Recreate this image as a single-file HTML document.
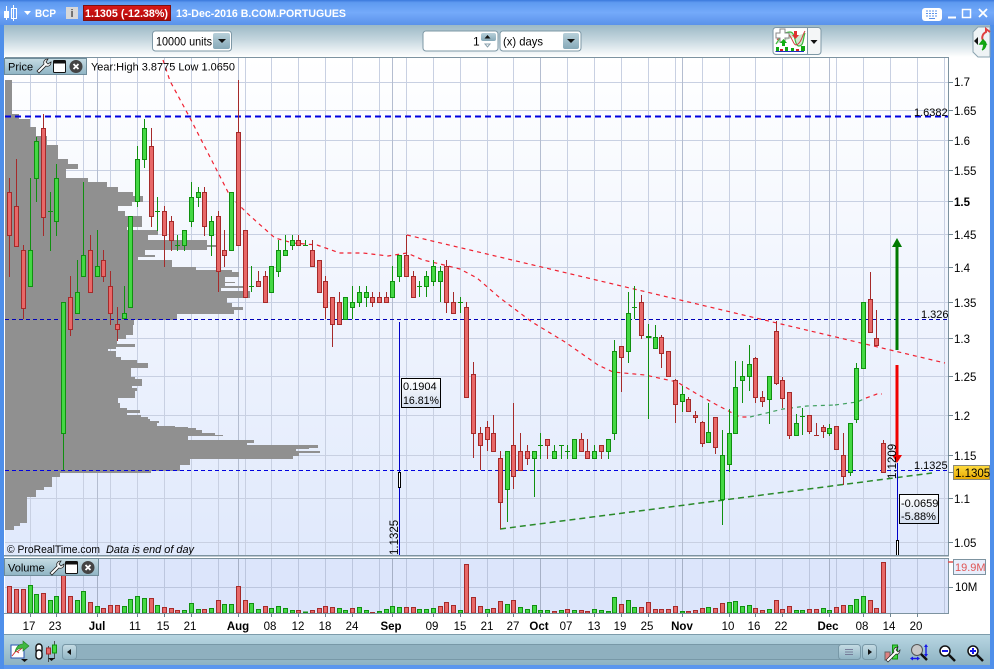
<!DOCTYPE html>
<html><head><meta charset="utf-8"><title>BCP</title>
<style>
html,body{margin:0;padding:0;background:#fff;width:994px;height:669px;overflow:hidden}
svg{display:block;position:absolute;left:0;top:0}
text{font-family:"Liberation Sans",sans-serif;font-size:11px;fill:#000}
.w{fill:#fff;font-weight:bold}
.m{text-anchor:middle}
.b{font-weight:bold}
.a text,.xl text{font-size:11.5px}
</style></head><body>
<svg width="994" height="669" viewBox="0 0 994 669" xmlns="http://www.w3.org/2000/svg">
<defs>
<linearGradient id="tb" x1="0" y1="0" x2="0" y2="1"><stop offset="0" stop-color="#3a78dc"/><stop offset=".1" stop-color="#5e9af0"/><stop offset=".5" stop-color="#74aafa"/><stop offset="1" stop-color="#5a92ea"/></linearGradient>
<linearGradient id="tool" x1="0" y1="0" x2="0" y2="1"><stop offset="0" stop-color="#9cb9c6"/><stop offset=".45" stop-color="#c4d6de"/><stop offset="1" stop-color="#ffffff"/></linearGradient>
<linearGradient id="plot" x1="0" y1="0" x2="0" y2="1"><stop offset="0" stop-color="#ffffff"/><stop offset="1" stop-color="#e0e9fc"/></linearGradient>
<linearGradient id="bot" x1="0" y1="0" x2="0" y2="1"><stop offset="0" stop-color="#b8d6e2"/><stop offset="1" stop-color="#8db2c2"/></linearGradient>
<linearGradient id="lab" x1="0" y1="0" x2="0" y2="1"><stop offset="0" stop-color="#c6dce4"/><stop offset="1" stop-color="#8fb4c4"/></linearGradient>
<linearGradient id="btn" x1="0" y1="0" x2="0" y2="1"><stop offset="0" stop-color="#b8d0da"/><stop offset="1" stop-color="#86a9b8"/></linearGradient>
<linearGradient id="yel" x1="0" y1="0" x2="0" y2="1"><stop offset="0" stop-color="#ffdc40"/><stop offset="1" stop-color="#e8a800"/></linearGradient>
<linearGradient id="rb" x1="0" y1="0" x2="0" y2="1"><stop offset="0" stop-color="#d81818"/><stop offset="1" stop-color="#b00808"/></linearGradient>
<linearGradient id="note" x1="0" y1="0" x2="0" y2="1"><stop offset="0" stop-color="#ffffff"/><stop offset="1" stop-color="#d4dff0"/></linearGradient>
</defs>
<!-- window frame -->
<rect width="994" height="669" fill="#5a96ee"/>
<rect x="0" y="0" width="994" height="25" fill="url(#tb)"/>
<rect x="4" y="25" width="986" height="32" fill="url(#tool)"/>
<rect x="4" y="57" width="986" height="578" fill="#fff"/>
<rect x="4" y="635" width="986" height="30" fill="url(#bot)"/>
<rect x="4" y="634" width="986" height="1" fill="#7d9cab"/>
<rect x="0" y="25" width="4" height="644" fill="#4f8fea"/>
<rect x="990" y="25" width="4" height="644" fill="#4f8fea"/>
<!-- title bar -->
<g shape-rendering="crispEdges">
<path d="M6.500 6V20M13.500 5V21" stroke="#fff" fill="none"/>
<rect x="4" y="11" width="5" height="7" fill="#fff"/>
<rect x="11.500" y="8.500" width="5" height="10" fill="none" stroke="#fff"/>
</g>
<path d="M24 11h7l-3.500 4z" fill="#fff"/>
<text x="35" y="17" class="w" textLength="21" lengthAdjust="spacingAndGlyphs">BCP</text>
<rect x="66" y="7" width="12" height="12" fill="#d8d8d8"/>
<text x="72" y="17" class="m b" style="fill:#555">i</text>
<rect x="83.500" y="5.500" width="87" height="15" fill="url(#rb)" stroke="#7c1010"/>
<text x="85" y="17" class="w" textLength="83" lengthAdjust="spacingAndGlyphs">1.1305 (-12.38%)</text>
<text x="176" y="17" class="w" textLength="170" lengthAdjust="spacingAndGlyphs">13-Dec-2016 B.COM.PORTUGUES</text>
<rect x="922" y="8" width="20" height="13" rx="3" fill="#fff"/>
<path d="M926 11h12M926 13.500h12M926 16h12" stroke="#5a92ea" stroke-dasharray="2 1" fill="none"/>
<path d="M929 18.500h6" stroke="#5a92ea"/>
<path d="M948 17.500h8" stroke="#fff" stroke-width="2" fill="none"/>
<rect x="962.500" y="9.500" width="8" height="8" fill="none" stroke="#fff" stroke-width="1.500"/>
<path d="M979 9l8 8M987 9l-8 8" stroke="#fff" stroke-width="1.800" fill="none"/>
<!-- toolbar controls -->
<rect x="152.500" y="31" width="79" height="20" rx="3" fill="#fff" stroke="#7e98a6"/>
<text x="156" y="45.500" textLength="56" lengthAdjust="spacingAndGlyphs" style="font-size:12px">10000 units</text>
<rect x="213" y="33" width="17" height="16" rx="2" fill="url(#btn)"/>
<path d="M218 39h8l-4 4z" fill="#111"/>
<rect x="423" y="31" width="75" height="20" rx="3" fill="#fff" stroke="#7e98a6"/>
<text x="473" y="45.500" style="font-size:12px">1</text>
<rect x="481" y="33" width="15" height="8" rx="2" fill="url(#btn)"/>
<path d="M484.500 38.500h6l-3-3.500z" fill="#111"/>
<path d="M485 44h5l-2.500 3z" fill="none" stroke="#8aa0ac"/>
<rect x="500" y="31" width="81" height="20" rx="3" fill="#fff" stroke="#7e98a6"/>
<text x="503" y="45.500" textLength="40" lengthAdjust="spacingAndGlyphs" style="font-size:12px">(x) days</text>
<rect x="563" y="33" width="16" height="16" rx="2" fill="url(#btn)"/>
<path d="M567 39h8l-4 4z" fill="#111"/>
<rect x="773" y="27.500" width="48" height="27" rx="3" fill="#f4f6f7" stroke="#7e98a6"/>
<rect x="774" y="28.500" width="33" height="25" rx="2" fill="#fff"/>
<path d="M807.500 28V54" stroke="#7e98a6"/>
<path d="M776 44C781 36 784 32 790 32S794 46 799 46 803 38 805 33" fill="#cfe8cf" stroke="#3cba3c" stroke-width="1.200"/>
<path d="M777 40C782 34 786 30 790 36S794 47 798 44 802 36 805 31" fill="none" stroke="#d04040"/>
<path d="M776 33h4v-4h5v4h4v5h-4v4h-5v-4h-4z" fill="#fff" stroke="#888"/>
<path d="M794 31h3v4h2l-3.500 4-3.500-4h2z" fill="#e03030"/>
<path d="M782 46v-3h-2l3.500-4 3.500 4h-2v3z" fill="#10b010"/>
<path d="M775.500 51.500H804" stroke="#2030c0"/>
<path d="M776 47h3v4h-3zM785 47h3v4h-3zM791 48h3v3h-3zM801 46h4v5h-4z" fill="#10a810"/>
<path d="M780 49h3v2h-3zM796 49h3v2h-3z" fill="#d02020"/>
<path d="M810.500 40h7l-3.500 4z" fill="#111"/>
<path d="M990 27h-12l-5 5v20l5 5h12z" fill="#eef3f5" stroke="#8aa3b0"/>
<path d="M978 37v8l-4-4z" fill="#111"/>
<path d="M984 41c-3-2-2-7 2-9v-3l4 3" fill="none" stroke="#e04040" stroke-width="2"/>
<path d="M984 41c3 2 2 7-2 9M983 40l3 4h-6z" fill="#10b010" stroke="#10a010" stroke-width="1.500"/>
<!-- price panel -->
<rect x="5" y="57" width="943" height="498" fill="url(#plot)"/>
<g stroke="#c8d0e2" fill="none" shape-rendering="crispEdges">
<path d="M5 82.500H948M5 110.500H948M5 140.500H948M5 170.500H948M5 201.500H948M5 234.500H948M5 267.500H948M5 302.500H948M5 338.500H948M5 376.500H948M5 415.500H948M5 455.500H948M5 498.500H948M5 542.500H948"/>
<path d="M30.500 57V555M56.500 57V555M83.500 57V555M110.500 57V555M137.500 57V555M164.500 57V555M191.500 57V555M218.500 57V555M245.500 57V555M271.500 57V555M298.500 57V555M325.500 57V555M352.500 57V555M379.500 57V555M406.500 57V555M433.500 57V555M460.500 57V555M487.500 57V555M513.500 57V555M567.500 57V555M594.500 57V555M621.500 57V555M648.500 57V555M675.500 57V555M702.500 57V555M729.500 57V555M755.500 57V555M782.500 57V555M809.500 57V555M836.500 57V555M863.500 57V555M890.500 57V555M917.500 57V555M944.500 57V555"/>
<path d="M97.500 57V555M238.500 57V555M392.500 57V555M540.500 57V555M682.500 57V555M829.500 57V555" stroke="#b4bdd0"/>
</g>
<!-- volume profile -->
<path fill="#909090" d="M5 80H12V114H19V119H30V127H36V136H47V145H58V159H68V164H78V169H66V178H88V182H107V187H118V192H133V196H143V202H132V206H118V211H125V216H142V227H127V230H158V235H148V240H207V245H221V247H207V250H145V255H155V257H138V260H172V267H196V270H232V272H239V277H225V282H235V283H225V286H248V288H221V291H250V298H227V303H232V307H243V310H234V314H177V320H134V325H133V335H126V339H117V344H135V347H116V349H108V351H116V357H121V360H137V363H148V368H131V377H135V379H142V386H132V388H137V391H135V398H118V403H120V408H127V410H140V413H127V415H141V417H148V419H150V421H159V423H157V426H175V427H188V428H196V430H202V433H215V435H223V436H188V440H254V443H247V445H318V448H309V449H296V451H320V453H299V456H293V459H190V465H180V471H151V473H60V477H52V487H44V490H36V497H27V523H20V526H14V530H5Z"/>
<!-- horizontal levels -->
<path d="M5 116.500H948" stroke="#0000e0" stroke-width="2" stroke-dasharray="6 4" fill="none" shape-rendering="crispEdges"/>
<path d="M5 319.500H948" stroke="#0000b8" stroke-dasharray="4 3" fill="none" shape-rendering="crispEdges"/>
<path d="M5 470.500H948" stroke="#0000e0" stroke-dasharray="4 3" fill="none" shape-rendering="crispEdges"/>
<!-- trend lines -->
<g fill="none" stroke-dasharray="4 4" stroke-width="1.200">
<path d="M163 60L170 81 190 118 230 196 247 213 258 223 275 238 293 243 317 245 340 253 363 253 388 256 407 253 423 260 440 264 460 269 477 278 500 298 532 322 565 342 598 365 613 372 645 375 677 382 697 394 717 405 740 417 750 417" stroke="#f02030"/>
<path d="M750 417L783 409 807 406 835 405" stroke="#3f9f5f"/>
<path d="M835 405L857 402 866 398" stroke="#3f9f5f"/>
<path d="M866 398L877 394 882 394" stroke="#f02030"/>
<path d="M407 235L945 363" stroke="#f02030"/>
<path d="M500 529L932 473" stroke="#2a8a2a" stroke-width="1.500" stroke-dasharray="6 4"/>
</g>
<!-- candle wicks -->
<path fill="none" stroke="#a52a2a" shape-rendering="crispEdges" d="M9.500 178V277M16.500 159V246M23.500 245V319M43.500 114V236M70.500 276V336M90.500 235V292M103.500 250V282M110.500 271V325M117.500 307V341M151.500 128V227M164.500 206V267M171.500 216V251M204.500 187V236M218.500 211V292M224.500 230V267M238.500 80V245M258.500 271V286M265.500 271V302M298.500 235V245M312.500 240V266M325.500 276V319M332.500 297V347M339.500 292V324M372.500 292V307M379.500 292V302M386.500 292V302M406.500 235V276M413.500 271V297M446.500 260V313M453.500 292V313M466.500 302V397M473.500 362V458M480.500 427V470M487.500 421V451M493.500 415V451M500.500 451V529M513.500 403V489M520.500 433V470M527.500 445V465M547.500 439V459M581.500 433V451M587.500 439V458M601.500 445V459M621.500 346V392M641.500 295V339M661.500 335V368M675.500 379V423M688.500 397V411M695.500 411V423M702.500 421V447M715.500 417V454M755.500 357V403M762.500 391V407M776.500 321V385M782.500 377V408M789.500 392V439M809.500 415V434M816.500 423V435M814 435.500H819M823.500 425V438M843.500 433V485M870.500 272V332M876.500 310V346M883.500 440V472"/>
<path fill="none" stroke="#109010" shape-rendering="crispEdges" d="M30.500 178V286M36.500 137V202M50.500 192V251M48 211.500H53M56.500 164V236M63.500 302V470M77.500 260V313M83.500 182V276M97.500 230V276M124.500 286V318M137.500 146V207M144.500 119V168M157.500 197V231M155 211.500H160M177.500 235V251M175 245.500H180M184.500 230V251M191.500 182V227M198.500 187V207M211.500 216V256M251.500 266V292M249 286.500H254M278.500 240V277M285.500 235V255M292.500 235V250M305.500 240V245M303 245.500H308M352.500 286V319M359.500 286V307M366.500 286V307M392.500 266V297M399.500 255V282M419.500 281V297M417 286.500H422M426.500 271V297M433.500 260V286M440.500 266V302M460.500 297V313M458 302.500H463M507.500 451V522M534.500 451V497M540.500 433V459M538 445.500H543M554.500 445V458M561.500 445V459M559 445.500H564M567.500 445V459M565 451.500H570M594.500 445V458M608.500 439V459M614.500 340V440M628.500 292V363M634.500 286V319M632 307.500H637M648.500 324V419M646 337.500H651V336.500H646M655.500 325V348M682.500 386V412M708.500 403V442M722.500 430V525M729.500 409V472M735.500 361V433M742.500 361V403M749.500 345V391M769.500 376V424M796.500 414V435M802.500 408V435M800 416.500H805M829.500 424V436M850.500 423V476M856.500 363V423"/>
<!-- candle bodies -->
<path fill="#e86868" stroke="#a52a2a" shape-rendering="crispEdges" d="M7.500 192.500h4V235.500h-4zM14.500 206.500h4V246.500h-4zM21.500 250.500h4V308.500h-4zM41.500 128.500h4V217.500h-4zM68.500 297.500h4V329.500h-4zM88.500 250.500h4V292.500h-4zM101.500 260.500h4V276.500h-4zM108.500 286.500h4V313.500h-4zM115.500 324.500h4V329.500h-4zM149.500 146.500h4V216.500h-4zM162.500 211.500h4V235.500h-4zM169.500 221.500h4V240.500h-4zM202.500 192.500h4V226.500h-4zM216.500 216.500h4V271.500h-4zM222.500 250.500h4V255.500h-4zM236.500 132.500h4V245.500h-4zM243.500 230.500h4V297.500h-4zM256.500 281.500h4V286.500h-4zM263.500 276.500h4V302.500h-4zM296.500 240.500h4V245.500h-4zM310.500 250.500h4V266.500h-4zM317.500 260.500h4V292.500h-4zM323.500 281.500h4V307.500h-4zM330.500 297.500h4V324.500h-4zM337.500 302.500h4V324.500h-4zM370.500 297.500h4V302.500h-4zM377.500 297.500h4V302.500h-4zM384.500 297.500h4V302.500h-4zM404.500 255.500h4V276.500h-4zM411.500 276.500h4V297.500h-4zM444.500 266.500h4V302.500h-4zM451.500 302.500h4V313.500h-4zM464.500 307.500h4V397.500h-4zM471.500 374.500h4V433.500h-4zM478.500 433.500h4V445.500h-4zM485.500 427.500h4V439.500h-4zM491.500 433.500h4V451.500h-4zM498.500 458.500h4V502.500h-4zM511.500 445.500h4V476.500h-4zM518.500 451.500h4V470.500h-4zM525.500 451.500h4V458.500h-4zM545.500 439.500h4V445.500h-4zM579.500 439.500h4V451.500h-4zM585.500 451.500h4V458.500h-4zM599.500 445.500h4V451.500h-4zM619.500 346.500h4V357.500h-4zM639.500 302.500h4V335.500h-4zM659.500 337.500h4V353.500h-4zM666.500 351.500h4V376.500h-4zM673.500 380.500h4V404.500h-4zM686.500 399.500h4V411.500h-4zM693.500 415.500h4V417.500h-4zM700.500 422.500h4V443.500h-4zM713.500 417.500h4V447.500h-4zM753.500 358.500h4V397.500h-4zM760.500 397.500h4V401.500h-4zM774.500 331.500h4V383.500h-4zM780.500 380.500h4V398.500h-4zM787.500 392.500h4V435.500h-4zM807.500 415.500h4V431.500h-4zM821.500 427.500h4V431.500h-4zM834.500 426.500h4V449.500h-4zM841.500 455.500h4V476.500h-4zM868.500 299.500h4V332.500h-4zM874.500 338.500h4V345.500h-4zM881.500 443.500h4V472.500h-4z"/>
<path fill="#44d844" stroke="#109010" shape-rendering="crispEdges" d="M28.500 250.500h4V286.500h-4zM34.500 141.500h4V178.500h-4zM54.500 178.500h4V221.500h-4zM61.500 302.500h4V433.500h-4zM75.500 292.500h4V313.500h-4zM81.500 255.500h4V276.500h-4zM95.500 266.500h4V276.500h-4zM122.500 313.500h4V318.500h-4zM128.500 216.500h4V307.500h-4zM135.500 159.500h4V201.500h-4zM142.500 128.500h4V159.500h-4zM182.500 230.500h4V245.500h-4zM189.500 197.500h4V221.500h-4zM196.500 192.500h4V197.500h-4zM209.500 221.500h4V235.500h-4zM229.500 192.500h4V250.500h-4zM269.500 266.500h4V292.500h-4zM276.500 250.500h4V271.500h-4zM283.500 250.500h4V255.500h-4zM290.500 240.500h4V245.500h-4zM343.500 297.500h4V319.500h-4zM350.500 302.500h4V307.500h-4zM357.500 292.500h4V302.500h-4zM364.500 292.500h4V297.500h-4zM390.500 281.500h4V297.500h-4zM397.500 255.500h4V276.500h-4zM424.500 276.500h4V286.500h-4zM431.500 266.500h4V281.500h-4zM438.500 271.500h4V281.500h-4zM505.500 451.500h4V489.500h-4zM532.500 451.500h4V458.500h-4zM552.500 451.500h4V458.500h-4zM572.500 439.500h4V458.500h-4zM592.500 451.500h4V458.500h-4zM606.500 439.500h4V451.500h-4zM612.500 351.500h4V433.500h-4zM626.500 313.500h4V351.500h-4zM653.500 337.500h4V348.500h-4zM680.500 394.500h4V401.500h-4zM706.500 432.500h4V442.500h-4zM720.500 455.500h4V499.500h-4zM727.500 433.500h4V464.500h-4zM733.500 387.500h4V433.500h-4zM740.500 376.500h4V380.500h-4zM747.500 364.500h4V376.500h-4zM767.500 376.500h4V399.500h-4zM794.500 423.500h4V435.500h-4zM827.500 428.500h4V433.500h-4zM848.500 423.500h4V472.500h-4zM854.500 368.500h4V419.500h-4zM861.500 302.500h4V368.500h-4z"/>
<!-- measure tool left -->
<path d="M399.500 322V555" stroke="#0000c8" shape-rendering="crispEdges"/>
<rect x="398.500" y="472.500" width="2" height="15" fill="#fff" stroke="#000" shape-rendering="crispEdges"/>
<rect x="401.500" y="378.500" width="39" height="29" fill="url(#note)" stroke="#000" shape-rendering="crispEdges"/>
<text x="403" y="390">0.1904</text>
<text x="403" y="404" textLength="36" lengthAdjust="spacingAndGlyphs">16.81%</text>
<text transform="translate(398 555) rotate(-90)" style="font-size:11.5px">1.1325</text>
<!-- arrows -->
<path d="M897 350V245" stroke="#007a00" stroke-width="3" fill="none"/>
<path d="M892 247L897 238 902 247z" fill="#007a00"/>
<path d="M897 365V457" stroke="#f00000" stroke-width="3" fill="none"/>
<path d="M892 455H902L897 463z" fill="#f00000"/>
<path d="M897.500 463V555" stroke="#0000c8" shape-rendering="crispEdges"/>
<rect x="896.500" y="540.500" width="2" height="15" fill="#fff" stroke="#000" shape-rendering="crispEdges"/>
<rect x="899.500" y="494.500" width="39" height="29" fill="url(#note)" stroke="#000" shape-rendering="crispEdges"/>
<text x="901" y="507">-0.0659</text>
<text x="901" y="520">-5.88%</text>
<text transform="translate(896 479) rotate(-90)" style="font-size:11.5px">1.1209</text>
<text x="914" y="116">1.6382</text>
<text x="921" y="318">1.326</text>
<text x="914" y="469">1.1325</text>
<text x="7" y="553" textLength="93" lengthAdjust="spacingAndGlyphs">© ProRealTime.com</text>
<text x="106" y="553" style="font-style:italic" textLength="88" lengthAdjust="spacingAndGlyphs">Data is end of day</text>
<!-- price label -->
<rect x="4.500" y="58.500" width="82" height="16" fill="url(#lab)" stroke="#6f8c9a" shape-rendering="crispEdges"/>
<text x="8" y="70.500">Price</text>
<g id="ic">
<path d="M37 71l7-7c-1-3 1-5 4-5l-2 3 2 2 3-2c0 3-2 5-5 4l-7 7z" fill="#fff" stroke="#222" stroke-width=".8"/>
<rect x="53.500" y="60.500" width="12" height="12" rx="1" fill="#fff" stroke="#111"/>
<rect x="53.500" y="60.500" width="12" height="3" fill="#111"/>
<circle cx="76" cy="66.500" r="6.500" fill="#444"/>
<path d="M73.500 64l5 5M78.500 64l-5 5" stroke="#fff" stroke-width="1.800"/>
</g>
<text x="91" y="70.500" textLength="144" lengthAdjust="spacingAndGlyphs">Year:High 3.8775 Low 1.0650</text>
<rect x="4" y="555" width="945" height="1.500" fill="#7d93a0"/>
<path d="M948.500 57V556" stroke="#7d93a0" shape-rendering="crispEdges"/>
<path d="M5 57.500H948" stroke="#7d93a0" shape-rendering="crispEdges"/>
<!-- y axis -->
<path d="M948 82.500h5M948 110.500h5M948 140.500h5M948 170.500h5M948 201.500h5M948 234.500h5M948 267.500h5M948 302.500h5M948 338.500h5M948 376.500h5M948 415.500h5M948 455.500h5M948 498.500h5M948 542.500h5M948 472.500h5" stroke="#6f8592" shape-rendering="crispEdges"/>
<g class="a">
<text x="954" y="86">1.7</text><text x="954" y="115">1.65</text><text x="954" y="145">1.6</text><text x="954" y="175">1.55</text>
<text x="954" y="206" class="b">1.5</text><text x="954" y="239">1.45</text><text x="954" y="272">1.4</text><text x="954" y="307">1.35</text>
<text x="954" y="343">1.3</text><text x="954" y="381">1.25</text><text x="954" y="420">1.2</text><text x="954" y="460">1.15</text>
<text x="954" y="503">1.1</text><text x="954" y="547">1.05</text>
<rect x="953.500" y="465.500" width="36" height="14" fill="url(#yel)" stroke="#8a8a7a"/>
<text x="955" y="477">1.1305</text>
</g>
<!-- volume panel -->
<rect x="5" y="558" width="943" height="55" fill="#dce5fb"/>
<g stroke="#bcc6de" fill="none" shape-rendering="crispEdges">
<path d="M5 587.500H948"/>
<path d="M30.500 558V613M56.500 558V613M83.500 558V613M110.500 558V613M137.500 558V613M164.500 558V613M191.500 558V613M218.500 558V613M245.500 558V613M271.500 558V613M298.500 558V613M325.500 558V613M352.500 558V613M379.500 558V613M406.500 558V613M433.500 558V613M460.500 558V613M487.500 558V613M513.500 558V613M567.500 558V613M594.500 558V613M621.500 558V613M648.500 558V613M675.500 558V613M702.500 558V613M729.500 558V613M755.500 558V613M782.500 558V613M809.500 558V613M836.500 558V613M863.500 558V613M890.500 558V613M917.500 558V613M944.500 558V613"/>
<path d="M97.500 558V613M238.500 558V613M392.500 558V613M540.500 558V613M682.500 558V613M829.500 558V613" stroke="#a6b0c6"/>
</g>
<path fill="#e86868" stroke="#a52a2a" shape-rendering="crispEdges" d="M7.500 586.500h4V613h-4zM14.500 589.500h4V613h-4zM21.500 589.500h4V613h-4zM41.500 593.500h4V613h-4zM61.500 575.500h4V613h-4zM68.500 596.500h4V613h-4zM88.500 602.500h4V613h-4zM101.500 608.500h4V613h-4zM108.500 605.500h4V613h-4zM115.500 605.500h4V613h-4zM149.500 598.500h4V613h-4zM162.500 607.500h4V613h-4zM169.500 608.500h4V613h-4zM175.500 610.500h4V613h-4zM202.500 609.500h4V613h-4zM216.500 600.500h4V613h-4zM236.500 586.500h4V613h-4zM243.500 600.500h4V613h-4zM263.500 606.500h4V613h-4zM296.500 610.500h4V613h-4zM310.500 610.500h4V613h-4zM317.500 608.500h4V613h-4zM323.500 606.500h4V613h-4zM330.500 607.500h4V613h-4zM350.500 608.500h4V613h-4zM370.500 612.500h4V613h-4zM404.500 607.500h4V613h-4zM411.500 607.500h4V613h-4zM438.500 606.500h4V613h-4zM444.500 602.500h4V613h-4zM451.500 605.500h4V613h-4zM464.500 564.500h4V613h-4zM471.500 597.500h4V613h-4zM478.500 606.500h4V613h-4zM491.500 608.500h4V613h-4zM498.500 601.500h4V613h-4zM511.500 600.500h4V613h-4zM552.500 611.500h4V613h-4zM565.500 609.500h4V613h-4zM579.500 610.500h4V613h-4zM585.500 611.500h4V613h-4zM619.500 604.500h4V613h-4zM639.500 607.500h4V613h-4zM646.500 602.500h4V613h-4zM653.500 609.500h4V613h-4zM659.500 609.500h4V613h-4zM666.500 609.500h4V613h-4zM673.500 606.500h4V613h-4zM686.500 611.500h4V613h-4zM693.500 610.500h4V613h-4zM700.500 608.500h4V613h-4zM713.500 608.500h4V613h-4zM720.500 603.500h4V613h-4zM753.500 608.500h4V613h-4zM760.500 610.500h4V613h-4zM774.500 600.500h4V613h-4zM780.500 609.500h4V613h-4zM787.500 606.500h4V613h-4zM807.500 609.500h4V613h-4zM814.500 609.500h4V613h-4zM834.500 607.500h4V613h-4zM841.500 605.500h4V613h-4zM868.500 600.500h4V613h-4zM874.500 608.500h4V613h-4zM881.500 562.500h4V613h-4z"/>
<path fill="#44d844" stroke="#109010" shape-rendering="crispEdges" d="M28.500 585.500h4V613h-4zM34.500 594.500h4V613h-4zM48.500 600.500h4V613h-4zM54.500 596.500h4V613h-4zM75.500 600.500h4V613h-4zM81.500 591.500h4V613h-4zM95.500 606.500h4V613h-4zM122.500 606.500h4V613h-4zM128.500 599.500h4V613h-4zM135.500 596.500h4V613h-4zM142.500 598.500h4V613h-4zM155.500 605.500h4V613h-4zM182.500 610.500h4V613h-4zM189.500 603.500h4V613h-4zM196.500 609.500h4V613h-4zM209.500 608.500h4V613h-4zM222.500 604.500h4V613h-4zM229.500 604.500h4V613h-4zM249.500 603.500h4V613h-4zM256.500 609.500h4V613h-4zM269.500 608.500h4V613h-4zM276.500 606.500h4V613h-4zM283.500 608.500h4V613h-4zM290.500 610.500h4V613h-4zM303.500 612h4V613h-4zM337.500 608.500h4V613h-4zM343.500 610.500h4V613h-4zM357.500 607.500h4V613h-4zM364.500 610.500h4V613h-4zM377.500 611.500h4V613h-4zM384.500 609.500h4V613h-4zM390.500 606.500h4V613h-4zM397.500 607.500h4V613h-4zM417.500 609.500h4V613h-4zM424.500 609.500h4V613h-4zM431.500 608.500h4V613h-4zM458.500 610.500h4V613h-4zM485.500 609.500h4V613h-4zM505.500 604.500h4V613h-4zM518.500 607.500h4V613h-4zM525.500 609.500h4V613h-4zM532.500 605.500h4V613h-4zM538.500 610.500h4V613h-4zM545.500 610.500h4V613h-4zM559.500 610.500h4V613h-4zM572.500 610.500h4V613h-4zM592.500 609.500h4V613h-4zM599.500 610.500h4V613h-4zM606.500 611.500h4V613h-4zM612.500 597.500h4V613h-4zM626.500 600.500h4V613h-4zM632.500 607.500h4V613h-4zM680.500 611.500h4V613h-4zM706.500 607.500h4V613h-4zM727.500 602.500h4V613h-4zM733.500 601.500h4V613h-4zM740.500 606.500h4V613h-4zM747.500 605.500h4V613h-4zM767.500 609.500h4V613h-4zM794.500 610.500h4V613h-4zM800.500 610.500h4V613h-4zM821.500 608.500h4V613h-4zM827.500 610.500h4V613h-4zM848.500 605.500h4V613h-4zM854.500 599.500h4V613h-4zM861.500 596.500h4V613h-4z"/>
<path d="M5 558.500H948M948.500 558V614M4 613.500H949" stroke="#7d93a0" fill="none" shape-rendering="crispEdges"/>
<rect x="4.500" y="558.500" width="94" height="17" fill="url(#lab)" stroke="#6f8c9a" shape-rendering="crispEdges"/>
<text x="8" y="571.500">Volume</text>
<path d="M50 573l7-7c-1-3 1-5 4-5l-2 3 2 2 3-2c0 3-2 5-5 4l-7 7z" fill="#fff" stroke="#222" stroke-width=".8"/>
<rect x="65.500" y="561.500" width="12" height="12" rx="1" fill="#fff" stroke="#111"/>
<rect x="65.500" y="561.500" width="12" height="3" fill="#111"/>
<circle cx="88" cy="567.500" r="6.500" fill="#444"/>
<path d="M85.500 565l5 5M90.500 565l-5 5" stroke="#fff" stroke-width="1.800"/>
<path d="M948 587.500h5" stroke="#6f8592" shape-rendering="crispEdges"/>
<path d="M948 562h5" stroke="#e05050" stroke-width="1.500"/>
<rect x="953.500" y="559.500" width="32" height="15" fill="#e8eefc" stroke="#7d93a0" shape-rendering="crispEdges"/>
<text x="955" y="571" style="fill:#e05555">19.9M</text>
<text x="955" y="591" style="font-size:11.5px">10M</text>
<!-- x ticks -->
<path d="M30.500 613v4M56.500 613v4M97.500 613v4M137.500 613v4M164.500 613v4M191.500 613v4M238.500 613v4M271.500 613v4M298.500 613v4M325.500 613v4M352.500 613v4M392.500 613v4M433.500 613v4M460.500 613v4M487.500 613v4M513.500 613v4M540.500 613v4M567.500 613v4M594.500 613v4M621.500 613v4M648.500 613v4M682.500 613v4M729.500 613v4M755.500 613v4M782.500 613v4M829.500 613v4M863.500 613v4M890.500 613v4M917.500 613v4" stroke="#6f8592" shape-rendering="crispEdges"/>
<g class="xl">
<text x="29" y="630" class="m">17</text><text x="55" y="630" class="m">23</text><text x="97" y="630" class="m b">Jul</text>
<text x="135" y="630" class="m">11</text><text x="163" y="630" class="m">15</text><text x="190" y="630" class="m">21</text>
<text x="238" y="630" class="m b">Aug</text><text x="270" y="630" class="m">08</text><text x="298" y="630" class="m">12</text>
<text x="325" y="630" class="m">18</text><text x="352" y="630" class="m">24</text><text x="391" y="630" class="m b">Sep</text>
<text x="432" y="630" class="m">09</text><text x="460" y="630" class="m">15</text><text x="487" y="630" class="m">21</text>
<text x="513" y="630" class="m">27</text><text x="539" y="630" class="m b">Oct</text><text x="566" y="630" class="m">07</text>
<text x="594" y="630" class="m">13</text><text x="620" y="630" class="m">19</text><text x="647" y="630" class="m">25</text>
<text x="682" y="630" class="m b">Nov</text><text x="728" y="630" class="m">10</text><text x="754" y="630" class="m">16</text>
<text x="781" y="630" class="m">22</text><text x="828" y="630" class="m b">Dec</text><text x="862" y="630" class="m">08</text>
<text x="889" y="630" class="m">14</text><text x="916" y="630" class="m">20</text>
</g>
<!-- bottom toolbar -->
<rect x="11" y="645" width="13" height="13" fill="#fff" stroke="#2a55b0"/>
<path d="M12 656l4-5 3 2M17 652l9-7" stroke="#d03030" fill="none"/>
<path d="M15 652c1-5 4-8 8-8v-3l6 5-6 5v-3c-3 0-6 1-8 4z" fill="#40b840" stroke="#208020" stroke-width=".6"/>
<path d="M21 659h7l-3.500 3z" fill="#111"/>
<rect x="36" y="644" width="6" height="9" rx="3" fill="#fff" stroke="#111" stroke-width="1.400"/>
<rect x="36" y="650" width="6" height="9" rx="3" fill="#fff" stroke="#111" stroke-width="1.400"/>
<path d="M48.500 646v16M54.500 641v18" stroke="#333" stroke-width=".8"/>
<rect x="46.500" y="648" width="4" height="6" fill="#e86868" stroke="#a52a2a"/>
<rect x="52.500" y="645" width="4" height="8" fill="#44d844" stroke="#109010"/>
<path d="M48 658h7l-3.500 3z" fill="#111"/>
<rect x="62.500" y="644.500" width="790" height="15" rx="3" fill="#8fb0bf" stroke="#7898a7"/>
<rect x="62.500" y="644.500" width="14" height="15" rx="3" fill="url(#lab)" stroke="#7898a7"/>
<path d="M71 649v6l-4-3z" fill="#111"/>
<rect x="838.500" y="644.500" width="22" height="15" rx="3" fill="url(#lab)" stroke="#7898a7"/>
<path d="M845 649.500h8M845 652h8M845 654.500h8" stroke="#668" stroke-width=".8"/>
<rect x="862.500" y="644.500" width="14" height="15" rx="3" fill="url(#lab)" stroke="#7898a7"/>
<path d="M868 649v6l4-3z" fill="#111"/>
<rect x="885" y="652" width="5" height="8" fill="#e08080" stroke="#666"/>
<rect x="892.500" y="645" width="5" height="14" fill="#44d844" stroke="#109010"/>
<path d="M886 660l8-8c-1-3 1-5 4-5l-2 3 2 2 2-2c0 3-2 5-4 4l-8 8z" fill="#fff" stroke="#222" stroke-width=".7"/>
<circle cx="917" cy="650" r="5.500" fill="#c8c8c8" stroke="#555"/>
<path d="M921 654l6 6" stroke="#111" stroke-width="2.500"/>
<path d="M911 658.500h8M926 646v9" stroke="#1818e8" stroke-width="1.400"/>
<path d="M910 658.500l3-2v4zM920 658.500l-3-2v4zM926 644l-2 3h4zM926 657l-2-3h4z" fill="#1818e8"/>
<circle cx="945" cy="651" r="5" fill="#fff" stroke="#111" stroke-width="1.500"/>
<path d="M942 651h6" stroke="#1818e8" stroke-width="2"/>
<path d="M949 655l6 6" stroke="#111" stroke-width="2.500"/>
<circle cx="973" cy="651" r="5" fill="#fff" stroke="#111" stroke-width="1.500"/>
<path d="M970 651h6M973 648v6" stroke="#1818e8" stroke-width="2"/>
<path d="M977 655l6 6" stroke="#111" stroke-width="2.500"/>
</svg>
</body></html>
